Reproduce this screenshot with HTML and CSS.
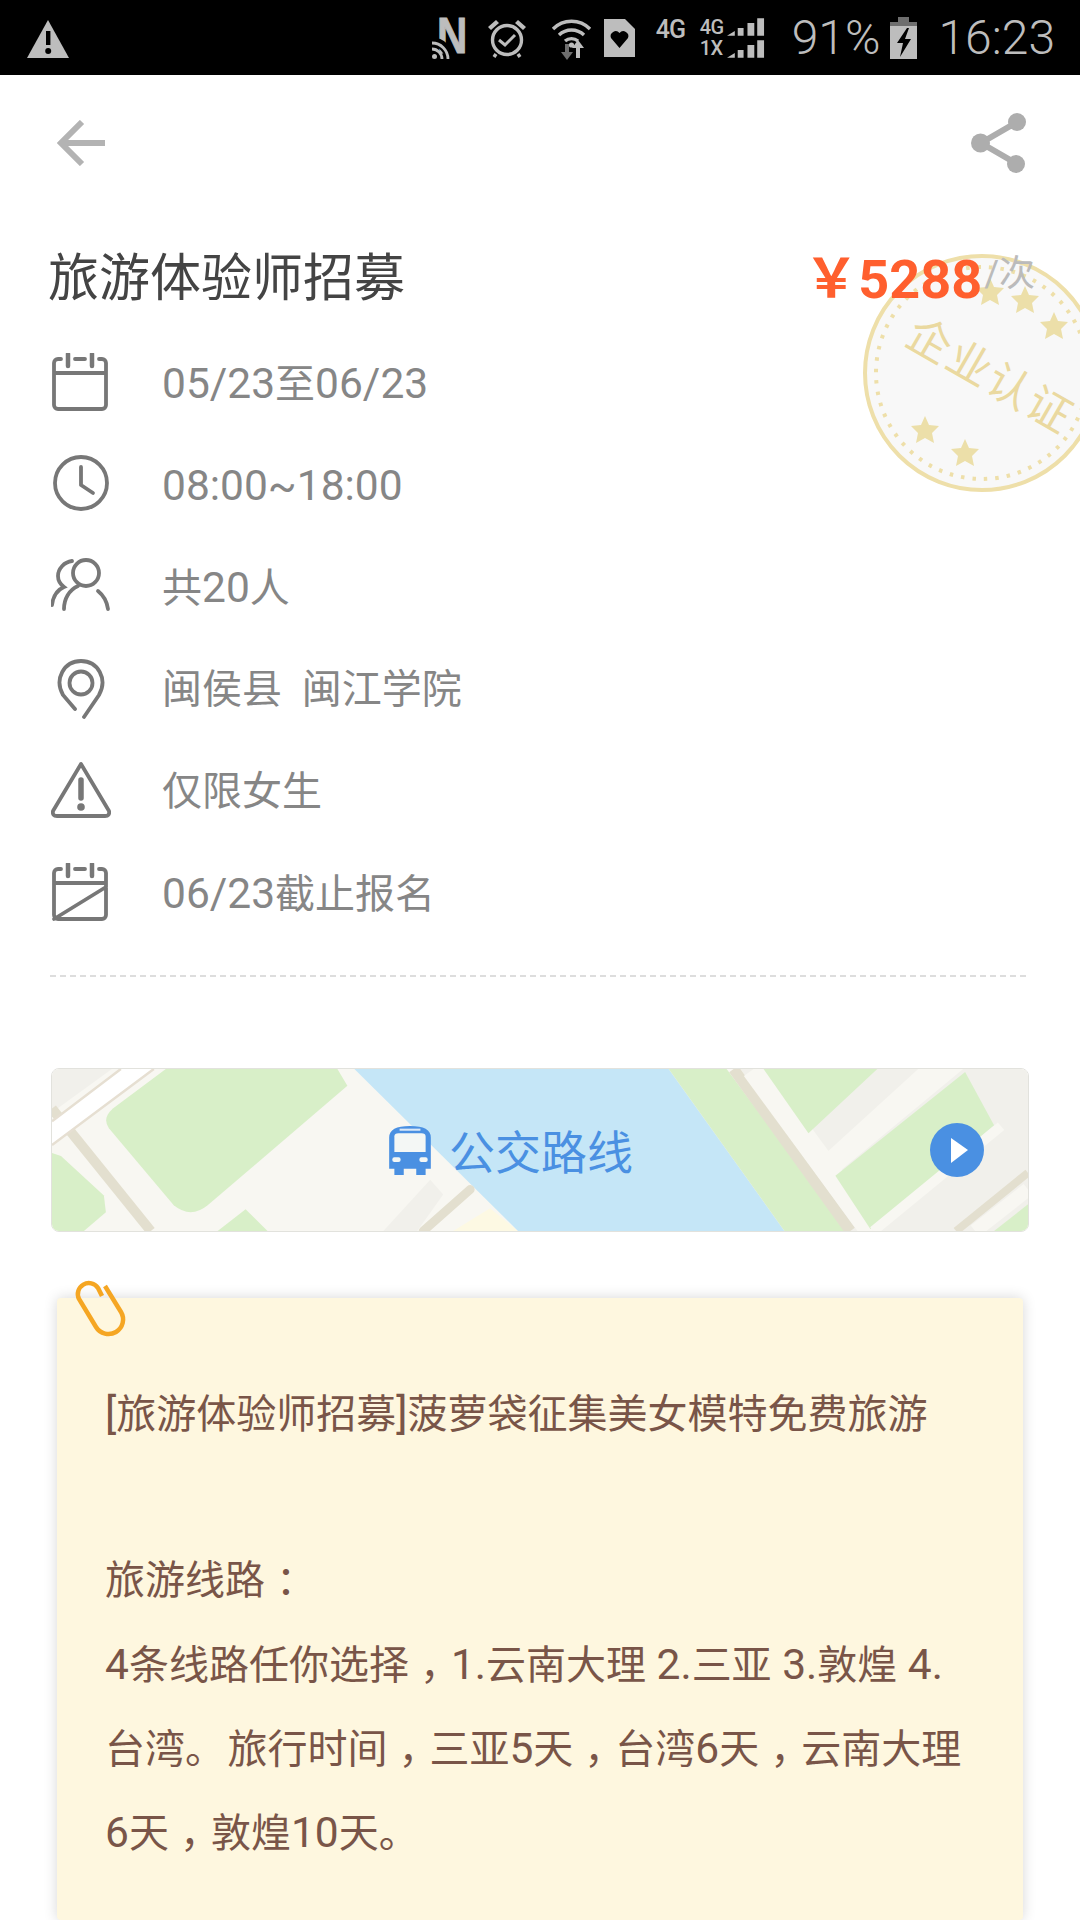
FILE: index.html
```html
<!DOCTYPE html>
<html lang="zh-CN">
<head>
<meta charset="utf-8">
<title>旅游体验师招募</title>
<link rel="stylesheet" href="styles.css">
</head>
<body>
<div class="page">
  <div class="status">
    <svg class="warn" viewBox="0 0 42 38"><path d="M21 0 42 38H0Z" fill="#bdbdbd"/><rect x="19" y="11" width="4.400" height="14" fill="#000"/><circle cx="21.200" cy="31" r="3" fill="#000"/></svg>
    <div class="status-right">
      <svg class="s-n" viewBox="0 0 37 42"><text class="n-glyph" transform="translate(5 36) scale(.84 1)">N</text><path d="M0 25a17 17 0 0 1 17 17" fill="none" stroke="#000" stroke-width="9"/><g fill="none" stroke="#bdbdbd" stroke-width="2.800"><path d="M0 26a16 16 0 0 1 16 16M0 32a10 10 0 0 1 10 10"/></g><circle cx="2.500" cy="39.500" r="2.500" fill="#bdbdbd"/></svg>
      <svg class="s-alarm" viewBox="0 0 40 40"><g fill="none" stroke="#bdbdbd" stroke-width="3.400"><circle cx="20" cy="22" r="14.500"/><path d="M12 22l6 5 10-10" stroke-width="3"/><path d="M9 36l-2 3M31 36l2 3"/></g><path d="M1 9 9 2l3 3-8 7ZM39 9 31 2l-3 3 8 7Z" fill="#bdbdbd"/></svg>
      <svg class="s-wifi" viewBox="0 0 41 44"><g fill="none" stroke="#bdbdbd" stroke-width="3.400"><path d="M2 13a26 26 0 0 1 37 0M8 19a18 18 0 0 1 25 0M14 25a10 10 0 0 1 13 0"/></g><circle cx="20.500" cy="29" r="2.600" fill="#bdbdbd"/><path d="M14 28h4v8h4l-6 8-6-8h4Z" fill="#6e6e6e"/><path d="M27 24l6 8h-4v10h-4V32h-4Z" fill="#bdbdbd"/></svg>
      <svg class="s-sim" viewBox="0 0 31 38"><path d="M0 0H21L31 10V38H0Z" fill="#bdbdbd"/><path d="M15.500 29 7 19a5 5 0 0 1 8.500-5 5 5 0 0 1 8.500 5Z" fill="#000"/></svg>
      <span class="s-4g">4G</span>
      <div class="s-combo">
        <div class="combo-labels"><span>4G</span><span>1X</span></div>
        <div class="combo-bars">
          <svg class="bars" viewBox="0 0 40 18"><path d="M0 18 8 13V18ZM11 10h6v8h-6ZM21 5h7v13h-7ZM31 0h7v18h-7Z" fill="#bdbdbd"/></svg>
          <svg class="bars" viewBox="0 0 40 18"><path d="M0 18 8 13V18ZM11 10h6v8h-6ZM21 5h7v13h-7ZM31 0h7v18h-7Z" fill="#bdbdbd"/></svg>
        </div>
      </div>
      <span class="s-pct">91%</span>
      <svg class="s-batt" viewBox="0 0 27 42"><path d="M8 0h11v5h8v6H0V5h8Z" fill="#6e6e6e"/><rect y="9" width="27" height="33" fill="#bdbdbd"/><path d="M17 11 7 26h6l-3 14 11-18h-6l4-11Z" fill="#000"/></svg>
      <span class="s-time">16:23</span>
    </div>
  </div>

  <header class="topbar">
    <svg class="back" viewBox="0 0 48 46"><path d="M25 2 4 23l21 21M4 23h44" fill="none" stroke="#b3b3b3" stroke-width="6"/></svg>
    <svg class="share" viewBox="0 0 56 60"><path d="M46 9 10 30l36 21" fill="none" stroke="#adadad" stroke-width="6"/><circle cx="46" cy="9" r="9" fill="#adadad"/><circle cx="9.500" cy="30" r="9.500" fill="#adadad"/><circle cx="45" cy="51" r="9" fill="#adadad"/></svg>
  </header>

  <div class="title-row">
    <h1 class="title">旅游体验师招募</h1>
    <div class="price"><span class="yen">￥</span><span class="amount">5288</span><span class="unit">/次</span></div>
  </div>

  <svg class="stamp" viewBox="0 0 240 240">
    <circle cx="120" cy="120" r="117" fill="#f8f8f8" stroke="#eedfa9" stroke-width="4"/>
    <circle cx="120" cy="120" r="106" fill="none" stroke="#eedfa9" stroke-width="4" stroke-dasharray="3.500 8"/>
    <g fill="#ecdfa9">
      <path d="M128 25l4 9 10 1-7 7 2 10-9-5-9 5 2-10-7-7 10-1Z"/>
      <path d="M163 33l4 9 10 1-7 7 2 10-9-5-9 5 2-10-7-7 10-1Z"/>
      <path d="M192 59l4 9 10 1-7 7 2 10-9-5-9 5 2-10-7-7 10-1Z"/>
      <path d="M63 163l4 9 10 1-7 7 2 10-9-5-9 5 2-10-7-7 10-1Z"/>
      <path d="M103 186l4 9 10 1-7 7 2 10-9-5-9 5 2-10-7-7 10-1Z"/>
    </g>
    <text class="stamp-text" x="128" y="138" text-anchor="middle" transform="rotate(30 128 123)">企业认证</text>
  </svg>

  <ul class="rows">
    <li class="row">
      <svg class="icon" viewBox="0 0 60 60"><g fill="none" stroke="#777" stroke-width="3.800" stroke-linecap="round"><path d="M10 6H7a4 4 0 0 0-4 4v42a4 4 0 0 0 4 4h44a4 4 0 0 0 4-4V10a4 4 0 0 0-4-4h-3M24 6h10M3 20h52"/><path d="M17 1v12M41 1v12" stroke-width="4.500"/></g></svg>
      <span class="row-text"><span class="num">05/23</span>至<span class="num">06/23</span></span>
    </li>
    <li class="row">
      <svg class="icon" viewBox="0 0 60 60"><g fill="none" stroke="#777" stroke-width="3.800" stroke-linecap="round" stroke-linejoin="round"><circle cx="30" cy="28" r="26"/><path d="M30 12v18l12 8"/></g></svg>
      <span class="row-text"><span class="num">08:00~18:00</span></span>
    </li>
    <li class="row">
      <svg class="icon" viewBox="0 0 60 60"><g fill="none" stroke="#777" stroke-width="3.800" stroke-linecap="round"><circle cx="35" cy="16" r="13"/><path d="M13 52c0-10 5-19 14-23M47 34c5 4 9 11 10 18"/><path d="M21 4c-8 1-14 8-14 15 0 4 2 8 6 11-7 3-11 10-12 18"/></g></svg>
      <span class="row-text">共<span class="num">20</span>人</span>
    </li>
    <li class="row">
      <svg class="icon" viewBox="0 0 60 60"><g fill="none" stroke="#777" stroke-width="3.800" stroke-linecap="round"><path d="M24 50 12 36C3 20 13 2 30 2s27 18 18 34L33 58"/><circle cx="30" cy="24" r="11.500"/></g></svg>
      <span class="row-text">闽侯县&nbsp;&nbsp;闽江学院</span>
    </li>
    <li class="row">
      <svg class="icon" viewBox="0 0 60 60"><path d="M30 3 2 50q-1 5 4 5h48q5 0 4-5Z" fill="none" stroke="#777" stroke-width="3.800" stroke-linejoin="round"/><path d="M30 19v18" stroke="#777" stroke-width="5.500" stroke-linecap="round"/><circle cx="30" cy="46" r="3.800" fill="#777"/></svg>
      <span class="row-text">仅限女生</span>
    </li>
    <li class="row">
      <svg class="icon" viewBox="0 0 60 60"><g fill="none" stroke="#777" stroke-width="3.800" stroke-linecap="round"><path d="M10 6H7a4 4 0 0 0-4 4v42a4 4 0 0 0 4 4h44a4 4 0 0 0 4-4V10a4 4 0 0 0-4-4h-3M24 6h10M3 20h52M3 56 55 24"/><path d="M17 1v12M41 1v12" stroke-width="4.500"/></g></svg>
      <span class="row-text"><span class="num">06/23</span>截止报名</span>
    </li>
  </ul>

  <div class="divider"></div>

  <div class="map">
    <svg class="map-art" viewBox="0 0 978 164" preserveAspectRatio="none">
      <rect width="978" height="164" fill="#f8f7f2"/>
      <path d="M0 0H60L0 44Z" fill="#f1f0eb"/>
      <path d="M114 0H286L296 17 156 138Q139 152 122 138L57 60Q50 50 61 40Z" fill="#d8efc8"/>
      <path d="M0 85 9 88 52 128 54 145 32 164H0Z" fill="#d8efc8"/>
      <path d="M166 164 194 142 216 164Z" fill="#d8efc8"/>
      <path d="M0 40 99 164" stroke="#e3dfcf" stroke-width="10" fill="none"/>
      <path d="M0 53 69 0H102L0 77Z" fill="#fff"/>
      <path d="M0 53 69 0M0 77 102 0" stroke="#e6dfd2" stroke-width="2.500" fill="none"/>
      <path d="M332 164 379 112 392 127 366 164Z" fill="#f1f0eb"/>
      <path d="M402 164 439 141 467 164Z" fill="#fdf9e3"/>
      <path d="M303 0H618L734 164H467Z" fill="#c5e6f7"/>
      <path d="M372 164 419 122" stroke="#e3dfcf" stroke-width="9" stroke-linecap="round" fill="none"/>
      <path d="M618 0H676L797 164H734Z" fill="#d8efc8"/>
      <path d="M690 0H978V164H800Z" fill="#f1f0eb"/>
      <path d="M683 0 800 164" stroke="#e3dfcf" stroke-width="11" fill="none"/>
      <path d="M703 0 822 164" stroke="#f8f7f2" stroke-width="24" fill="none"/>
      <path d="M713 0H827L758 65Z" fill="#d8efc8"/>
      <path d="M868 0H913L785 107 768 92Z" fill="#f8f7f2"/>
      <path d="M915 3 944 57 820 162 785 108Z" fill="#d8efc8"/>
      <path d="M823 164 951 58" stroke="#f8f7f2" stroke-width="10" fill="none"/>
      <path d="M906 164 978 105" stroke="#e3dfcf" stroke-width="8" fill="none"/>
      <path d="M925 164 978 122" stroke="#f8f7f2" stroke-width="14" fill="none"/>
      <path d="M944 164 978 137V164Z" fill="#d8efc8"/>
    </svg>
    <svg class="bus" viewBox="0 0 40 48"><path d="M0 12Q0 1 20 1T40 12V42H35V48H26V42H14V48H5V42H0Z" fill="#4a90e2"/><path d="M5 11Q5 8 9 8H31Q35 8 35 11V26H5Z" fill="#f4f7f5"/><rect x="10" y="3.500" width="20" height="2" fill="#dbe9f8"/><rect x="3" y="31" width="8" height="4.500" rx="2" fill="#f4f7f5"/><rect x="29" y="31" width="8" height="4.500" rx="2" fill="#f4f7f5"/></svg>
    <span class="map-label">公交路线</span>
    <svg class="play" viewBox="0 0 54 54"><circle cx="27" cy="27" r="27" fill="#4a90e2"/><path d="M21 15 38 27 21 40Z" fill="#fff"/></svg>
  </div>

  <article class="note">
    <svg class="clip" viewBox="0 0 56 62"><path d="M33 8 49 34A14.500 14.500 0 0 1 24 49L7 21A11 11 0 0 1 26 10L30 18" fill="none" stroke="#f5a623" stroke-width="4.500"/></svg>
    <p class="note-text"><span class="num">[</span>旅游体验师招募<span class="num">]</span>菠萝袋征集美女模特免费旅游<br><br>旅游线路<span class="punc">：</span><br><span class="num">4</span>条线路任你选择<span class="punc">，</span><span class="num">1.</span>云南大理<span class="num"> 2.</span>三亚<span class="num"> 3.</span>敦煌<span class="num"> 4.</span><br>台湾<span class="stop">。</span>旅行时间<span class="punc">，</span>三亚<span class="num">5</span>天<span class="punc">，</span>台湾<span class="num">6</span>天<span class="punc">，</span>云南大理<br><span class="num">6</span>天<span class="punc">，</span>敦煌<span class="num">10</span>天。</p>
  </article>
</div>
</body>
</html>
```

FILE: styles.css
```css
* { box-sizing: border-box; }
html, body { margin: 0; padding: 0; background: #fff; }
body { font-family: Roboto, "Noto Sans CJK SC", sans-serif; }
.page { position: relative; width: 1080px; height: 1920px; overflow: hidden; background: #fff; }

.status { height: 75px; background: #000; color: #bdbdbd; display: flex; align-items: center; padding: 0 25px 0 27px; justify-content: space-between; }
.warn { width: 42px; height: 38px; margin-top: 2px; }
.status-right { display: flex; align-items: center; }
.s-n { width: 37px; height: 42px; }
.n-glyph { font: bold 50px "Liberation Sans", sans-serif; fill: #bdbdbd; stroke: #bdbdbd; stroke-width: 1px; }
.s-alarm { width: 40px; height: 40px; margin-left: 18px; }
.s-wifi { width: 41px; height: 44px; margin-left: 24px; }
.s-sim { width: 31px; height: 38px; margin-left: 12px; }
.s-4g { width: 32px; margin-left: 21px; font-size: 25px; font-weight: 500; margin-top: -17px; line-height: 25px; letter-spacing: -1px; }
.s-combo { width: 66px; height: 40px; margin-left: 12px; display: flex; }
.combo-labels { width: 27px; display: flex; flex-direction: column; justify-content: space-between; font-size: 20px; font-weight: 500; line-height: 19px; letter-spacing: -0.5px; }
.combo-bars { width: 39px; display: flex; flex-direction: column; justify-content: space-between; }
.bars { width: 39px; height: 18px; display: block; }
.s-pct { margin-left: 26px; font-size: 48px; font-weight: 300; line-height: 56px; }
.s-batt { width: 27px; height: 42px; margin-left: 10px; }
.s-time { margin-left: 21px; font-size: 48px; font-weight: 300; line-height: 56px; }

.topbar { height: 150px; display: flex; align-items: flex-start; justify-content: space-between; padding: 0 53px 0 57px; }
.back { width: 48px; height: 46px; margin-top: 45px; }
.share { width: 56px; height: 60px; margin-top: 38px; }

.title-row { height: 107px; display: flex; align-items: center; justify-content: space-between; padding: 0 45px 0 48px; position: relative; z-index: 2; }
.title { margin: 0; font-size: 51px; font-weight: 400; color: #444; line-height: 1; }
.price { display: flex; align-items: center; color: #ff5f2e; margin-top: 2px; line-height: 54px; }
.yen { font-size: 54px; font-weight: 700; }
.amount { font-size: 54px; font-weight: 700; }
.unit { font-size: 36px; color: #bbb; font-weight: 400; margin-left: 2px; line-height: 36px; margin-bottom: 12px; }

.stamp { position: absolute; left: 862px; top: 253px; width: 240px; height: 240px; z-index: 1; }
.stamp-text { font: 400 44px "Noto Sans CJK SC", sans-serif; fill: #ead9a0; letter-spacing: 2px; }

.rows { list-style: none; margin: 0; padding: 0 0 0 51px; position: relative; z-index: 2; }
.row { height: 102px; display: flex; align-items: center; }
.icon { width: 60px; height: 60px; flex: none; }
.row-text { margin: 2px 0 0 51px; font-size: 40px; color: #868686; line-height: 1; }
.num { font-size: 42.5px; }

.divider { margin: 31px 54px 0 50px; border-top: 2px dashed #ddd; height: 0; }

.map { position: relative; margin: 91px 51px 0 51px; height: 164px; border: 1px solid #e2e2dd; border-radius: 8px; overflow: hidden; display: flex; align-items: center; padding: 0 44px 0 337px; }
.map-art { position: absolute; inset: 0; width: 100%; height: 100%; }
.bus { position: relative; width: 42px; height: 50px; flex: none; margin-top: -1px; }
.map-label { position: relative; margin-left: 18px; font-size: 46px; color: #4a90e2; line-height: 1; margin-top: 6px; }
.play { position: relative; width: 54px; height: 54px; margin-left: auto; margin-top: -1px; }

.note { position: relative; margin: 66px 57px 0 57px; height: 622px; background: #fef7df; border-radius: 4px; box-shadow: 0 0 14px rgba(0, 0, 0, .16); padding: 74px 40px 0 48px; }
.clip { position: absolute; left: 15px; top: -20px; width: 56px; height: 62px; }
.note-text { margin: 0; font-size: 40px; line-height: 83.2px; color: #795548; white-space: nowrap; }
.punc { display: inline-block; width: 1.05em; text-align: center; font-feature-settings: "halt"; }
.stop { display: inline-block; width: 1.06em; }
```
